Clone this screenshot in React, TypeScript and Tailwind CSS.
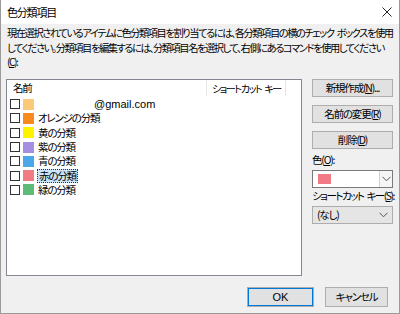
import React from "react";

const font = "font-['Noto_Sans_CJK_JP','Noto_Sans',sans-serif] [font-feature-settings:'palt']";

function Chevron() {
  return (
    <svg width="9" height="6" viewBox="0 0 9 6" className="block">
      <path d="M0.5 0.8 L4.5 4.8 L8.5 0.8" fill="none" stroke="#555" strokeWidth="1" />
    </svg>
  );
}

function Sp({ w = "w-[3px]" }: { w?: string }) {
  return <span className={`inline-block ${w}`} />;
}

function Btn({ children, className = "" }: { children: React.ReactNode; className?: string }) {
  return (
    <div
      className={`flex items-center justify-center bg-[#e1e1e1] border border-[#adadad] text-black whitespace-nowrap ${className}`}
    >
      {children}
    </div>
  );
}

const rows: { color: string; label: React.ReactNode; selected?: boolean }[] = [
  { color: "#fbc97a", label: <span className="pl-[56px] font-['Liberation_Sans',sans-serif] text-[11px] tracking-normal">@gmail.com</span> },
  { color: "#f98b1c", label: "オレンジの分類" },
  { color: "#fff200", label: "黄の分類" },
  { color: "#a58fe0", label: "紫の分類" },
  { color: "#4ca7e8", label: "青の分類" },
  { color: "#f07b85", label: "赤の分類", selected: true },
  { color: "#5cbb77", label: "緑の分類" },
];

export default function App() {
  return (
    <div className={`w-[400px] h-[314px] bg-[#f0f0f0] border-x border-b border-[#9a9a9a] flex flex-col text-black ${font} text-[10.5px] tracking-[-1.2px]`}>
      {/* Title bar */}
      <div className="h-[24px] bg-white flex items-center justify-between pl-[6px] pr-[7px] shrink-0">
        <span className="text-[11px] leading-none tracking-[-1.2px]">色分類項目</span>
        <svg width="10" height="10" viewBox="0 0 10 10" className="block">
          <path d="M0.5 0.5 L9.5 9.5 M9.5 0.5 L0.5 9.5" stroke="#222" strokeWidth="1" />
        </svg>
      </div>

      {/* Description */}
      <div className="h-[55px] pl-[6px] pt-[2px] leading-[14.5px] whitespace-nowrap shrink-0 text-[10.25px] tracking-[-1.45px]">
        現在選択されているアイテムに色分類項目を割り当てるには、各分類項目の横のチェック<Sp />ボックスを使用
        <br />
        してください。分類項目を編集するには、分類項目名を選択して、右側にあるコマンドを使用してください
        <br />
        (<span className="underline">C</span>):
      </div>

      {/* Main */}
      <div className="flex shrink-0">
        <div className="ml-[5px] w-[296px] h-[197px] bg-white border border-[#828790] flex flex-col">
          <div className="h-[16px] flex items-stretch">
            <div className="w-[200px] pl-[6px] flex items-center border-r border-[#e5e5e5]">名前</div>
            <div className="w-[79px] pl-[5px] flex items-center border-r border-[#e5e5e5] whitespace-nowrap text-[10px] tracking-[-1.4px]">
              ショートカット<Sp />キー
            </div>
          </div>
          <div className="pt-[1px] flex flex-col">
            {rows.map((r, i) => (
              <div key={i} className="h-[14.3px] flex items-center pl-[3px]">
                <div className="w-[10px] h-[10px] border border-[#333] bg-white shrink-0" />
                <div className="w-[11px] h-[11px] ml-[3px] shrink-0" style={{ backgroundColor: r.color }} />
                {r.selected ? (
                  <span className="ml-[3px] px-[1px] leading-[12px] bg-[#cce4f7] border border-dotted border-[#333] whitespace-nowrap">
                    {r.label}
                  </span>
                ) : (
                  <span className="ml-[4px] leading-[12px] whitespace-nowrap">{r.label}</span>
                )}
              </div>
            ))}
          </div>
        </div>

        {/* Right column */}
        <div className="ml-[10px] w-[81px] flex flex-col">
          <Btn className="h-[18px]">
            新規作成(<span className="underline">N</span>)...
          </Btn>
          <Btn className="h-[18px] mt-[8px]">
            名前の変更(<span className="underline">R</span>)
          </Btn>
          <Btn className="h-[18px] mt-[8px]">
            削除(<span className="underline">D</span>)
          </Btn>
          <div className="h-[14px] mt-[4px] leading-[14px]">
            色(<span className="underline">O</span>):
          </div>
          <div className="h-[18px] mt-[3px] bg-white border border-[#7a7a7a] flex items-stretch">
            <div className="flex-1 flex items-center pl-[5px]">
              <div className="w-[13px] h-[10px] bg-[#f07b85]" />
            </div>
            <div className="w-[13px] border-l border-[#d0d0d0] bg-[#f5f5f5] flex items-center justify-center">
              <Chevron />
            </div>
          </div>
          <div className="h-[14px] mt-[1px] leading-[14px] whitespace-nowrap tracking-[-1.5px]">
            ショートカット<Sp />キー(<span className="underline">S</span>):
          </div>
          <div className="h-[18px] mt-[3px] bg-[#e5e5e5] border border-[#adadad] flex items-center justify-between pl-[4px] pr-[4px]">
            <span>(なし)</span>
            <Chevron />
          </div>
        </div>
      </div>

      {/* Footer */}
      <div className="flex justify-end pt-[11px] pr-[11px] gap-[11px]">
        <Btn className="w-[67px] h-[20px] border-[#0078d7] shadow-[inset_0_0_0_1px_#0078d7] font-['Liberation_Sans',sans-serif] tracking-normal text-[11px]">OK</Btn>
        <Btn className="w-[63px] h-[20px]">キャンセル</Btn>
      </div>
    </div>
  );
}
